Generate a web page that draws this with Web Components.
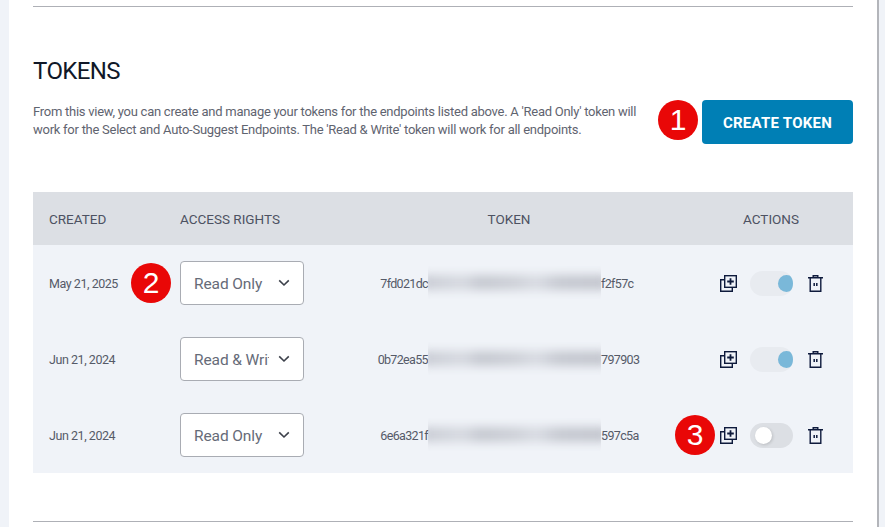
<!DOCTYPE html>
<html>
<head>
<meta charset="utf-8">
<title>Tokens</title>
<style>
    html, body { margin: 0; height: 527px; overflow: hidden; }
    body {
        background: #f0f3f8;
        font-family: Roboto, "Liberation Sans", sans-serif;
    }
</style>
</head>
<body>
<token-panel>
    <token-row created="May 21, 2025" rights="Read Only" start="7fd021dc" end="f2f57c" state="on" marker="2" marker-at="select"></token-row>
    <token-row created="Jun 21, 2024" rights="Read &amp; Write" start="0b72ea55" end="797903" state="on"></token-row>
    <token-row created="Jun 21, 2024" rights="Read Only" start="6e6a321f" end="597c5a" state="off" marker="3" marker-at="copy"></token-row>
</token-panel>

<script>
// numbered red callouts drawn over the screenshot
class MarkerBadge extends HTMLElement {
    connectedCallback() {
        this.attachShadow({ mode: 'open' });
        this.shadowRoot.innerHTML = `
            <style>
                :host {
                    position: absolute;
                    display: flex;
                    align-items: center;
                    justify-content: center;
                    width: 40px;
                    height: 40px;
                    border-radius: 50%;
                    background: #e90707;
                    color: #fff;
                    font: 400 30px/1 "Liberation Sans", Arial, sans-serif;
                    letter-spacing: 0;
                }
            </style>
            <slot></slot>
        `;
    }
}

class AccessSelect extends HTMLElement {
    connectedCallback() {
        this.attachShadow({ mode: 'open' });
        this.shadowRoot.innerHTML = `
            <style>
                :host {
                    display: flex;
                    align-items: center;
                    box-sizing: border-box;
                    width: 124px;
                    height: 44px;
                    padding: 0 13px;
                    background: #fff;
                    border: 1px solid #a9acb3;
                    border-radius: 4px;
                    color: #666b78;
                    font-size: 15.5px;
                    letter-spacing: -0.1px;
                }
                .value {
                    flex: 1;
                    min-width: 0;
                    padding-top: 1px;
                    overflow: hidden;
                    white-space: nowrap;
                }
                svg { flex-shrink: 0; margin-left: 9px; }
            </style>
            <span class="value"><slot></slot></span>
            <svg width="12" height="8" viewBox="0 0 12 8" fill="none" stroke="#3c404a" stroke-width="1.6">
                <path d="M1.2 1.4L6 6l4.8-4.6"/>
            </svg>
        `;
    }
}

class ToggleSwitch extends HTMLElement {
    connectedCallback() {
        this.attachShadow({ mode: 'open' });
        this.shadowRoot.innerHTML = `
            <style>
                :host {
                    display: block;
                    position: relative;
                    width: 43px;
                    height: 25px;
                    border-radius: 13px;
                    background: #dcdfe4;
                    overflow: hidden;
                }
                :host([state="on"]) { background: #e8ebf0; }
                .knob {
                    position: absolute;
                    top: 4px;
                    left: 5px;
                    width: 17px;
                    height: 17px;
                    border-radius: 50%;
                    background: #fff;
                    box-shadow: 1px 1px 3px rgba(0,0,0,0.15);
                }
                :host([state="on"]) .knob {
                    left: 28px;
                    background: #7ab8d9;
                    box-shadow: none;
                }
            </style>
            <div class="knob"></div>
        `;
    }
}

class TokenRow extends HTMLElement {
    connectedCallback() {
        const attr = (name) => this.getAttribute(name) || '';
        this.attachShadow({ mode: 'open' });
        this.shadowRoot.innerHTML = `
            <style>
                :host {
                    display: grid;
                    grid-template-columns: 147px 124px 410px 114px;
                    align-items: center;
                    height: 76px;
                    color: #555a68;
                    font-size: 12.5px;
                }
                .created { padding-left: 16px; letter-spacing: -0.45px; }
                .cell { position: relative; }
                .token {
                    display: grid;
                    grid-template-columns: 124px 173px 1fr;
                    align-items: center;
                    letter-spacing: -0.65px;
                    white-space: nowrap;
                }
                .start { text-align: right; }
                .smear {
                    position: relative;
                    height: 46px;
                    overflow: hidden;
                }
                .smear::after {
                    content: '';
                    position: absolute;
                    left: -6px;
                    right: -6px;
                    top: 15px;
                    height: 15px;
                    background: linear-gradient(90deg, #c9ccd4 0, #d6d9e0 22%, #c5c8d0 32%, #cdd0d7 50%, #d8dbe2 62%, #c6c9d1 74%, #c3c6ce 100%);
                    filter: blur(5px);
                }
                .actions {
                    display: flex;
                    align-items: center;
                    padding-left: 6px;
                }
                .actions svg { margin-top: 1px; flex-shrink: 0; }
                .actions toggle-switch { margin: 0 15px 0 13px; }
                marker-badge.select { left: -49px; top: 2px; }
                marker-badge.copy { left: -39px; top: -8px; }
            </style>
            <div class="created">${attr('created')}</div>
            <div class="cell"><access-select>${attr('rights')}</access-select></div>
            <div class="cell token">
                <span class="start">${attr('start')}</span>
                <div class="smear"></div>
                <span>${attr('end')}</span>
            </div>
            <div class="cell actions">
                <svg width="17" height="17" viewBox="0 0 17 17" fill="none" stroke="#0e1a3c" stroke-width="1.4">
                    <path d="M4.7 4.7H.7v11.6h11.6v-4"/>
                    <rect x="4.7" y=".7" width="11.6" height="11.6" fill="#f0f3f8"/>
                    <path d="M10.5 3.2v6.6M7.2 6.5h6.6" stroke-width="1.8"/>
                </svg>
                <toggle-switch state="${attr('state')}"></toggle-switch>
                <svg width="15" height="17" viewBox="0 0 15 17" fill="none" stroke="#0e1a3c" stroke-width="1.4">
                    <path d="M0 2.7h15M2.2 2.7v13.6h10.6V2.7M5.2 2.7V.8h4.6v1.9"/>
                    <path d="M6.2 8v3M8.8 8v3" stroke-width="1.5"/>
                </svg>
            </div>
        `;
        const marker = attr('marker');
        if (marker) {
            const badge = document.createElement('marker-badge');
            badge.textContent = marker;
            badge.className = attr('marker-at');
            const host = this.shadowRoot.querySelector(marker === '2' ? '.cell' : '.actions');
            host.appendChild(badge);
        }
    }
}

class TokenPanel extends HTMLElement {
    connectedCallback() {
        this.attachShadow({ mode: 'open' });
        this.shadowRoot.innerHTML = `
            <style>
                :host {
                    display: block;
                    box-sizing: border-box;
                    width: 870px;
                    height: 527px;
                    margin-left: 9px;
                    padding: 6px 24px 0;
                    background: #fff;
                    border-right: 2px solid #b3b5ba;
                }
                hr {
                    margin: 0;
                    border: 0;
                    height: 1px;
                    background: #aeb0b6;
                }
                h2 {
                    margin: 50px 0 0;
                    height: 28px;
                    font-size: 24px;
                    font-weight: 400;
                    line-height: 28px;
                    letter-spacing: -0.6px;
                    color: #101828;
                }
                .intro {
                    display: flex;
                    justify-content: space-between;
                    height: 93px;
                }
                p {
                    width: 625px;
                    margin: 18px 0 0;
                    color: #5f6470;
                    font-size: 13px;
                    line-height: 18px;
                    letter-spacing: -0.26px;
                }
                button {
                    position: relative;
                    width: 151px;
                    height: 44px;
                    margin-top: 15px;
                    padding: 2px 0 0;
                    border: 0;
                    border-radius: 4px;
                    background: #007fb5;
                    color: #fff;
                    font: 700 15px Roboto, "Liberation Sans", sans-serif;
                    letter-spacing: 0.25px;
                }
                button marker-badge { left: -44px; top: 0; }
                .table { margin-top: 14px; background: #f0f3f8; }
                .head {
                    display: grid;
                    grid-template-columns: 147px 124px 410px 114px;
                    align-items: center;
                    height: 53px;
                    background: #dcdfe4;
                    color: #4d5262;
                    font-size: 13.5px;
                }
                .head span:first-child { padding-left: 16px; }
                .head .center { text-align: center; }
                .head .rights { white-space: nowrap; }
                hr.bottom { margin-top: 48px; }
            </style>
            <hr>
            <h2>TOKENS</h2>
            <div class="intro">
                <p>From this view, you can create and manage your tokens for the endpoints listed above. A 'Read Only' token will work for the Select and Auto-Suggest Endpoints. The 'Read &amp; Write' token will work for all endpoints.</p>
                <button>CREATE TOKEN<marker-badge>1</marker-badge></button>
            </div>
            <div class="table">
                <div class="head">
                    <span>CREATED</span>
                    <span class="rights">ACCESS RIGHTS</span>
                    <span class="center">TOKEN</span>
                    <span class="center">ACTIONS</span>
                </div>
                <slot></slot>
            </div>
            <hr class="bottom">
        `;
    }
}

customElements.define('marker-badge', MarkerBadge);
customElements.define('access-select', AccessSelect);
customElements.define('toggle-switch', ToggleSwitch);
customElements.define('token-row', TokenRow);
customElements.define('token-panel', TokenPanel);
</script>
</body>
</html>
